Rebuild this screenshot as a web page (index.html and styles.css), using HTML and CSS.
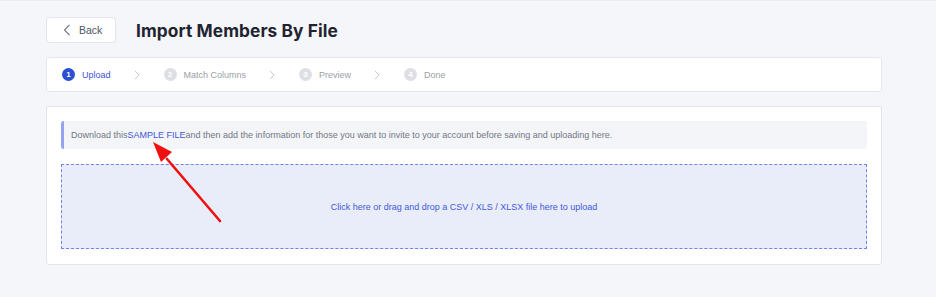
FILE: index.html
```html
<!DOCTYPE html>
<html>
<head>
<meta charset="utf-8">
<link rel="stylesheet" href="styles.css">
</head>
<body>
<div class="page">
  <header class="header">
    <button class="back">
      <svg width="8" height="12" viewBox="0 0 8 12"><path d="M6.5 0.8 L1.5 6 L6.5 11.2" fill="none" stroke="#6b7280" stroke-width="1.1"/></svg>
      <span>Back</span>
    </button>
    <h1 class="title">Import Members By File</h1>
  </header>

  <nav class="steps">
    <div class="step active"><span class="num">1</span><span class="label">Upload</span></div>
    <svg class="chev" width="6" height="10" viewBox="0 0 6 10"><path d="M1 1 L5 5 L1 9" fill="none" stroke="#c9cbd2" stroke-width="1"/></svg>
    <div class="step"><span class="num">2</span><span class="label">Match Columns</span></div>
    <svg class="chev" width="6" height="10" viewBox="0 0 6 10"><path d="M1 1 L5 5 L1 9" fill="none" stroke="#c9cbd2" stroke-width="1"/></svg>
    <div class="step"><span class="num">3</span><span class="label">Preview</span></div>
    <svg class="chev" width="6" height="10" viewBox="0 0 6 10"><path d="M1 1 L5 5 L1 9" fill="none" stroke="#c9cbd2" stroke-width="1"/></svg>
    <div class="step"><span class="num">4</span><span class="label">Done</span></div>
  </nav>

  <section class="card">
    <div class="info">Download this<a class="link">SAMPLE FILE</a>and then add the information for those you want to invite to your account before saving and uploading here.</div>
    <div class="drop">Click here or drag and drop a CSV / XLS / XLSX file here to upload</div>
    <svg class="arrow" width="80" height="90" viewBox="0 0 80 90">
      <path d="M73 82 L20 20" stroke="#f01010" stroke-width="2.6" stroke-linecap="round"/>
      <path d="M6 3 L25 13 L14 23 Z" fill="#f01010"/>
    </svg>
  </section>
</div>
</body>
</html>
```

FILE: styles.css
```css
* { box-sizing: border-box; }
html, body { margin: 0; padding: 0; }
body {
  background: #f5f6fa;
  font-family: "Liberation Sans", Arial, sans-serif;
  width: 936px;
  height: 297px;
  overflow: hidden;
  border-top: 1px solid #ebecf0;
}
.page {
  padding: 16px 54px 0 46px;
}
.header {
  display: flex;
  align-items: center;
  height: 26px;
  gap: 20px;
}
.back {
  width: 70px;
  height: 26px;
  background: #fff;
  border: 1px solid #e3e5ea;
  border-radius: 4px;
  display: flex;
  align-items: center;
  padding: 0 0 0 16px;
  gap: 8px;
  font-family: "Liberation Sans", Arial, sans-serif;
  font-size: 10.5px;
  color: #4b5563;
}
.title {
  margin: 0;
  font-family: Inter, "Liberation Sans", sans-serif;
  font-weight: 700;
  font-size: 17.3px;
  color: #1f2430;
  letter-spacing: 0.1px;
}
.steps {
  margin-top: 14px;
  height: 35px;
  background: #fff;
  border: 1px solid #e6e7ec;
  border-radius: 3px;
  display: flex;
  align-items: center;
  padding-left: 15px;
}
.step {
  display: flex;
  align-items: center;
  gap: 7px;
  font-size: 9px;
  color: #9a9ea8;
}
.num {
  width: 13px;
  height: 13px;
  border-radius: 50%;
  background: #dddfe4;
  color: #fff;
  font-size: 8px;
  font-weight: 700;
  display: flex;
  align-items: center;
  justify-content: center;
}
.step.active { color: #3e55d6; }
.step.active .num { background: #2d4fd6; }
.chev { margin: 0 24px 0 23px; }
.card {
  position: relative;
  margin-top: 14px;
  height: 159px;
  background: #fff;
  border: 1px solid #e3e4ea;
  border-radius: 3px;
  padding: 14px 14px 0 14px;
}
.info {
  height: 28px;
  background: #f4f5f9;
  border-left: 3px solid #94a3ee;
  border-radius: 3px;
  display: flex;
  align-items: center;
  padding-left: 7px;
  font-size: 9px;
  color: #727783;
}
.link { color: #3e55d6; }
.drop {
  margin-top: 15px;
  height: 85px;
  background: #e9edfa;
  border: 1px dashed #6f83e8;
  display: flex;
  align-items: center;
  justify-content: center;
  font-size: 9px;
  color: #4359d8;
}
.arrow {
  position: absolute;
  left: 100px;
  top: 32px;
}
```
